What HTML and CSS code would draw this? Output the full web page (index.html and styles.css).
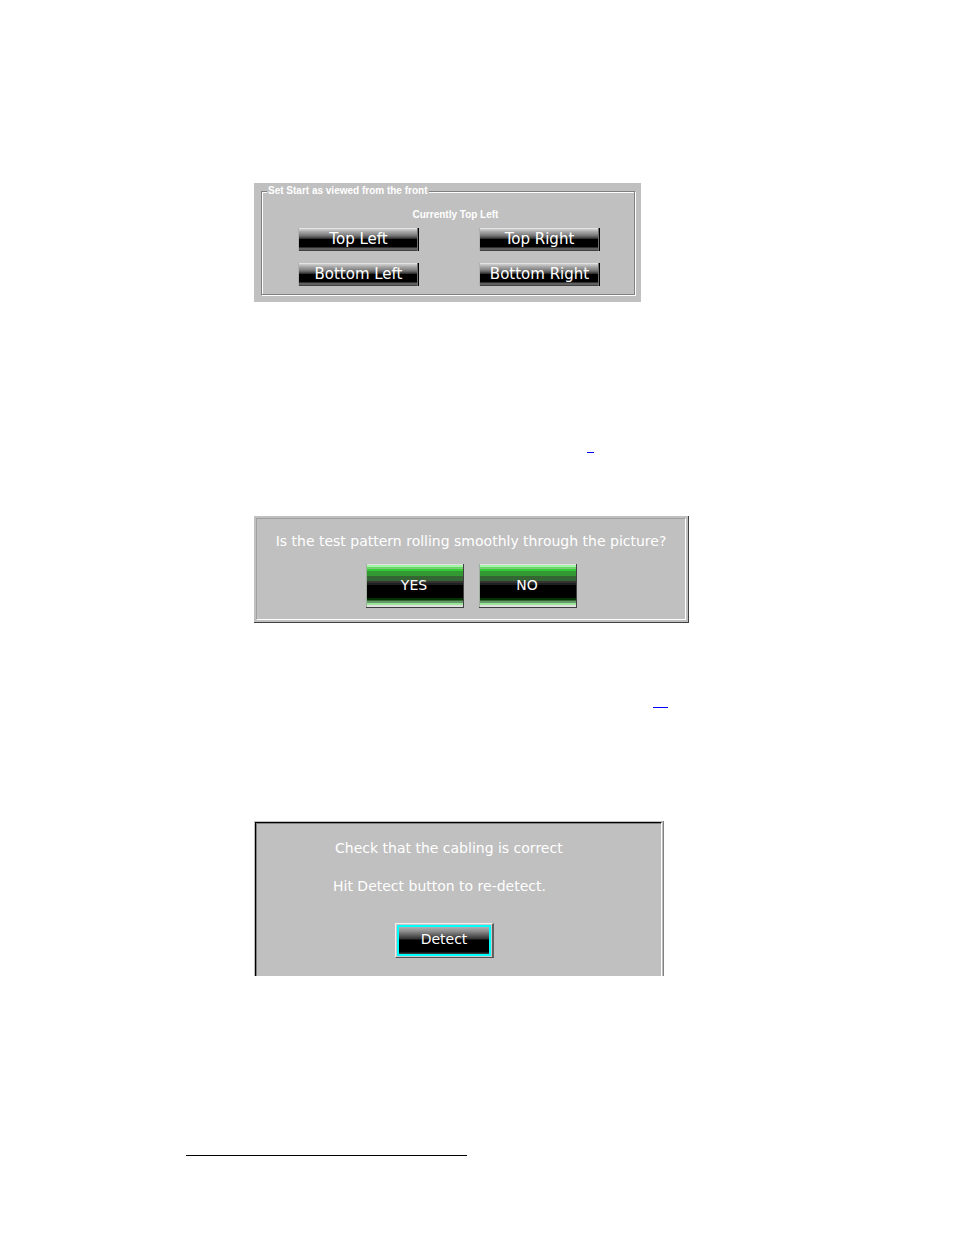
FILE: index.html
```html
<!DOCTYPE html>
<html lang="en">
<head>
<meta charset="utf-8">
<title>Set Start</title>
<link rel="stylesheet" href="styles.css">
</head>
<body>
<main class="page">
  <section class="panel start-panel">
    <fieldset class="group">
      <legend class="group-title">Set Start as viewed from the front</legend>
      <p class="current">Currently Top Left</p>
      <div class="corner-grid">
        <button type="button" class="btn corner">Top Left</button>
        <button type="button" class="btn corner">Top Right</button>
        <button type="button" class="btn corner">Bottom Left</button>
        <button type="button" class="btn corner">Bottom Right</button>
      </div>
    </fieldset>
  </section>
  <p class="note note-start"><a class="ref" href="#test" aria-label="Reference"></a></p>
  <section class="panel test-panel" id="test">
    <div class="test-inner">
      <p class="message">Is the test pattern rolling smoothly through the picture?</p>
      <div class="answers">
        <button type="button" class="btn answer">YES</button>
        <button type="button" class="btn answer">NO</button>
      </div>
    </div>
  </section>
  <p class="note note-test"><a class="ref ref-wide" href="#detect" aria-label="Reference"></a></p>
  <section class="panel detect-panel" id="detect">
    <div class="detect-inner">
      <p class="message check">Check that the cabling is correct</p>
      <p class="message hit">Hit Detect button to re-detect.</p>
      <button type="button" class="btn detect">Detect</button>
    </div>
  </section>
  <hr class="footnote-rule">
</main>
</body>
</html>
```

FILE: styles.css
```css
* { box-sizing: border-box; }

body {
  margin: 0;
  background: #fff;
  color: #fff;
  font-family: Verdana, "DejaVu Sans", sans-serif;
  font-size: 14px;
  line-height: 20px;
}

p { margin: 0; }

.page { padding: 183px 186px 79px; }

.panel {
  margin-left: 68px;
  background: #c0c0c0;
}

/* start corner */
.start-panel {
  max-width: 387px;
  padding: 2px 6px 7px 7px;
}

.group {
  min-width: 0;
  margin: 0;
  padding: 12px 0 8px;
  border: 1px solid #808080;
  box-shadow: 1px 1px 0 #fff, inset 1px 1px 0 #fff;
}

.group-title {
  margin-left: 5px;
  padding: 0 2px 0 1px;
  background: #c0c0c0;
  font: bold 10px/12px "Liberation Sans", Arial, sans-serif;
}

.current {
  padding-left: 15px;
  font: bold 10px/12px "Liberation Sans", Arial, sans-serif;
  text-align: center;
}

.corner-grid {
  display: grid;
  grid-template-columns: 121px 121px;
  justify-content: center;
  gap: 12px 60px;
  margin: 7px 0 0 2px;
}

.btn {
  margin: 0;
  padding: 0;
  border: 0;
  color: #fff;
  font: inherit;
  text-align: center;
}

.corner {
  height: 23px;
  padding: 0 0 2px 1px;
  border-right: 1px solid #000;
  background: linear-gradient(#e4e4e4 1px, #c8c8c8 1px 2px, #b0b0b0 3px, #8c8c8c 6px, #707070 8px, #404040 10px, #242424 11px, #000 11px 19px, #303030 19px 20px, #606060 20px 22px, #404040 22px);
  box-shadow: inset 1px 0 0 #b0b0b0, inset -1px 0 0 #707070;
  font-size: 15px;
}

.note {
  display: flex;
  color: #00f;
}

.note-start { padding: 150px 0 63px 401px; }
.note-test { padding: 84px 0 113px 467px; }

.ref {
  width: 7px;
  height: 1px;
  background: #00f;
}

.ref-wide { width: 15px; }

/* test pattern */
.test-panel {
  max-width: 435px;
  padding: 2px;
  border-right: 1px solid #404040;
  border-bottom: 1px solid #404040;
}

.test-inner {
  padding: 12px 0 11px;
  border: 1px solid #a0a0a0;
  border-right-color: #fff;
  border-bottom-color: #fff;
  text-align: center;
}

.answers {
  display: flex;
  justify-content: center;
  gap: 15px;
  margin-top: 13px;
}

.answer {
  width: 98px;
  height: 44px;
  padding-bottom: 2px;
  border-right: 1px solid #404040;
  border-bottom: 1px solid #404040;
  background: linear-gradient(#e0e0e0 1px, #a6f5a6 1px 3px, #66d966 3px 4px, #80c880 4px 5px, #33cc33 5px 7px, #339933 7px 12px, #336633 12px 17px, #333 17px 19px, #202020 19px 21px, #000 21px 34px, #003300 34px 36px, #336633 36px 37px, #669966 37px 39px, #99e699 39px 41px, #e0e0e0 41px);
  box-shadow: inset 1px 0 0 #a0b0a0;
}

/* detection */
.detect-panel {
  max-width: 410px;
  padding: 1px 1px 0;
  border-right: 1px solid #808080;
}

.detect-inner {
  padding: 15px 0 18px 79px;
  border-top: 1px solid #000;
  border-left: 1px solid #000;
  border-right: 1px solid #fff;
  box-shadow: inset 1px 1px 0 #808080;
}

.check { margin-bottom: 18px; }
.hit { margin-left: -2px; }

.detect {
  display: block;
  width: 99px;
  height: 35px;
  margin: 27px 0 0 60px;
  padding-bottom: 3px;
  border: 1px solid #f0f0f0;
  border-right: 2px solid #606060;
  border-bottom-color: #505050;
  background: linear-gradient(#c0c0c0 1px, #b0b0b0 3px, #909090 7px, #606060 11px, #303030 15px, #000 16px 28px, #303030 29px, #606060 32px);
  box-shadow: inset 0 0 0 1px #c8c8c8, inset 0 0 0 3px #00ffff;
}

.footnote-rule {
  width: 281px;
  height: 1px;
  margin: 179px 0 0;
  border: 0;
  background: #000;
}
```
